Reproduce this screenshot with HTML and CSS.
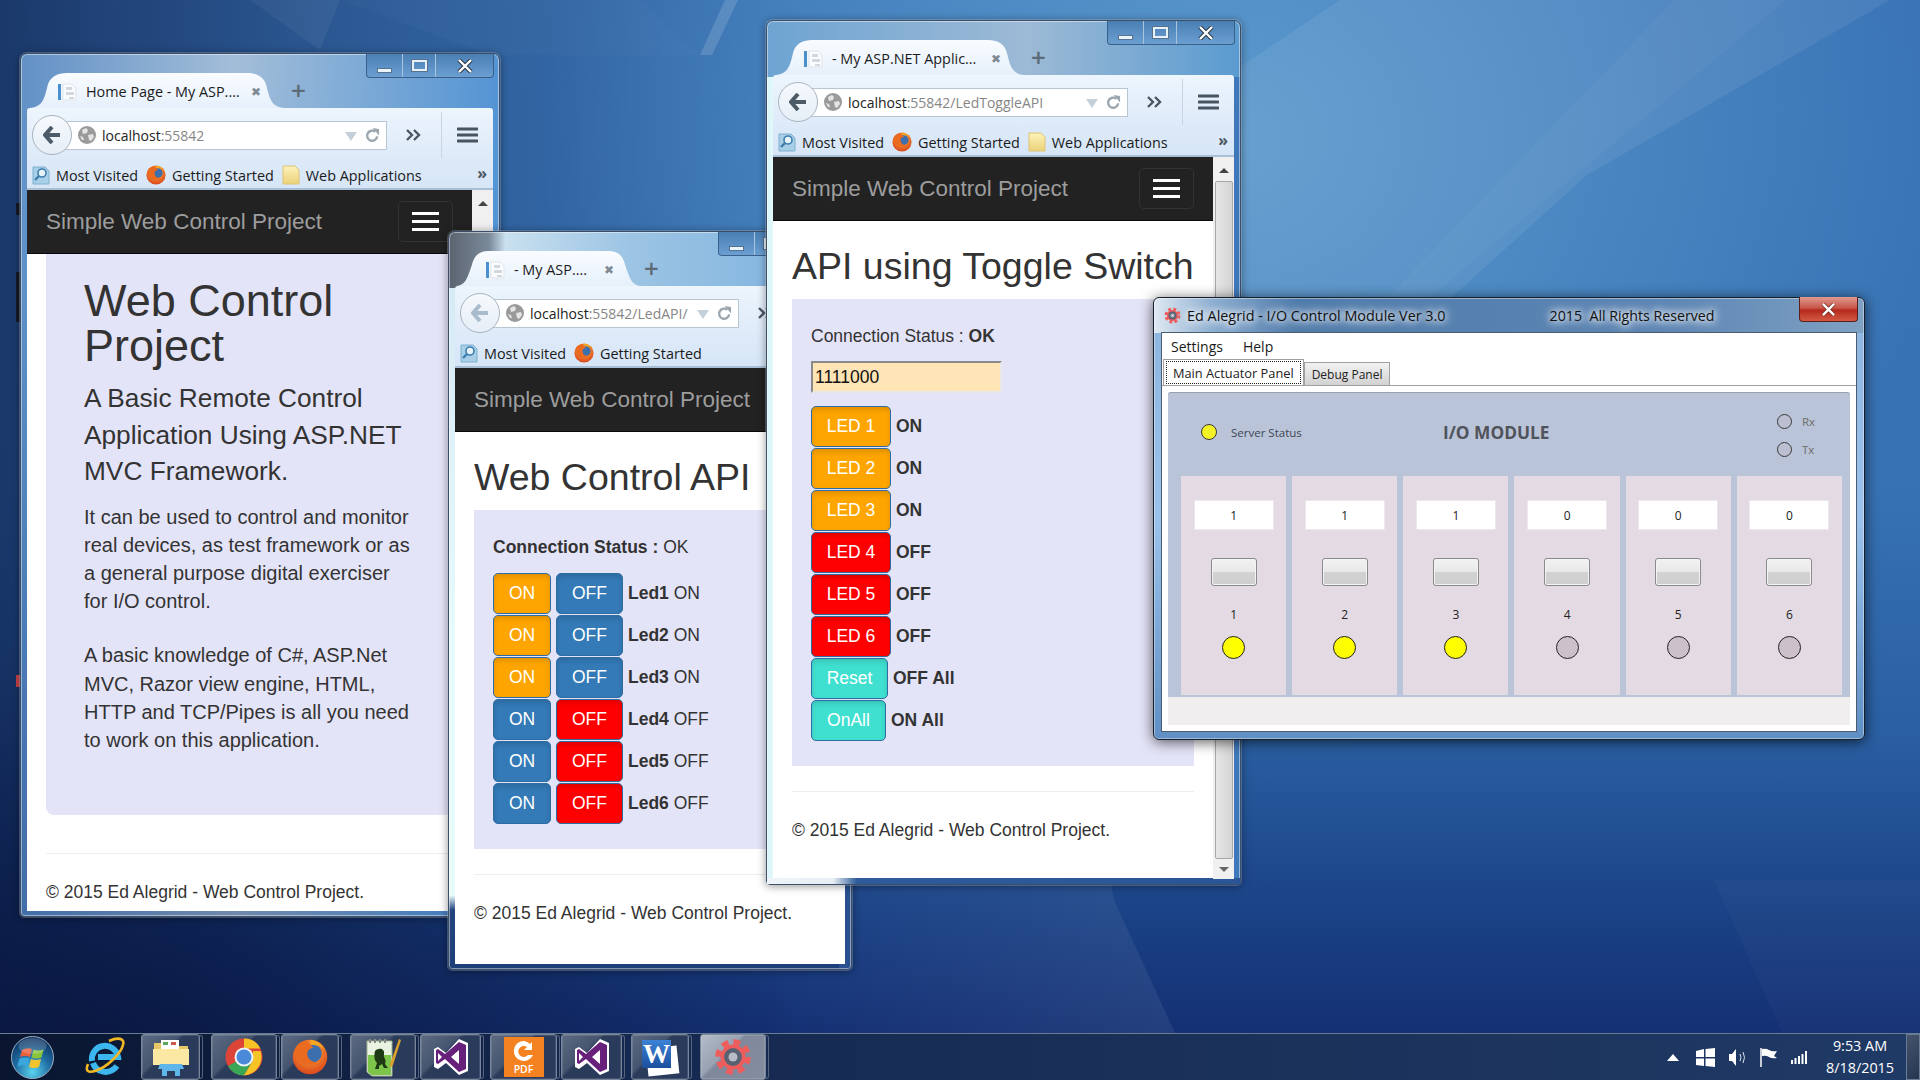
FILE: index.html
```html
<!DOCTYPE html>
<html lang="en">
<head>
    <meta charset="UTF-8">
    <meta name="viewport" content="width=device-width, initial-scale=1.0">
    <title>Simple Web Control Project</title>
    <link rel="stylesheet" href="styles.css">
</head>
<body>
    <svg class="defs" width="0" height="0">
        <defs>
            <linearGradient id="tab-fill" x1="0" y1="0" x2="0" y2="1">
                <stop offset="0" stop-color="#f9fcff"/>
                <stop offset="1" stop-color="#e6f0fb"/>
            </linearGradient>
            <linearGradient id="band-fade" x1="0" y1="0" x2="1" y2="0">
                <stop offset="0" stop-color="#fff" stop-opacity="0"/>
                <stop offset="1" stop-color="#fff" stop-opacity="0.07"/>
            </linearGradient>
            <radialGradient id="fx-body" cx="0.5" cy="0.35" r="0.7">
                <stop offset="0" stop-color="#ffb13a"/>
                <stop offset="1" stop-color="#d8401a"/>
            </radialGradient>
            <linearGradient id="folder-fill" x1="0" y1="0" x2="0" y2="1">
                <stop offset="0" stop-color="#fdf2b8"/>
                <stop offset="1" stop-color="#ecd27a"/>
            </linearGradient>
            <radialGradient id="orb-fill" cx="0.5" cy="0.85" r="0.85">
                <stop offset="0" stop-color="#59d3ee"/>
                <stop offset="0.5" stop-color="#1f6da4"/>
                <stop offset="1" stop-color="#0c2c58"/>
            </radialGradient>

            <symbol id="i-tab" viewBox="0 0 20 20">
                <rect x="0" y="2" width="3" height="16" fill="#4a90cf"/>
                <path d="M5 2h9l4 4v12H5z" fill="#fafcfe" stroke="#dfe4e8"/>
                <path d="M8 5h6v3H8zM8 10h8v3H8zM11 15h5v2h-5z" fill="#d2d8de"/>
            </symbol>
            <symbol id="i-globe" viewBox="0 0 18 18">
                <circle cx="9" cy="9" r="9" fill="#9a9a9a"/>
                <path d="M4 4l4-2 2 2-1 3-4 1zM10 9l5-1 1 3-3 4-2-1zM2 10l3 1 1 3-2 0z" fill="#e4e4e4"/>
            </symbol>
            <symbol id="i-back" viewBox="0 0 18 18">
                <path d="M9 1L2 9l7 8M3 9h14" fill="none" stroke="currentColor" stroke-width="4"/>
            </symbol>
            <symbol id="i-reload" viewBox="0 0 16 16">
                <path d="M13 9a5.4 5.4 0 1 1-2-5" fill="none" stroke="#9ca7b0" stroke-width="2.6"/>
                <path d="M8 0l7 1v7z" fill="#9ca7b0"/>
            </symbol>
            <symbol id="i-chev" viewBox="0 0 16 12">
                <path d="M1 1l5 5-5 5M8 1l5 5-5 5" fill="none" stroke="#4a5662" stroke-width="2.4"/>
            </symbol>
            <symbol id="i-menu" viewBox="0 0 21 16">
                <path d="M1 2h19M1 8h19M1 14h19" stroke="#475560" stroke-width="3" stroke-linecap="round"/>
            </symbol>
            <symbol id="i-visited" viewBox="0 0 18 19">
                <path d="M1 1h12l4 4v13H1z" fill="#a8cfe8" stroke="#7fb0d2"/>
                <circle cx="10" cy="7" r="4" fill="#e6f3fb" stroke="#3d7eaf" stroke-width="1.6"/>
                <path d="M7 10l-4 4" stroke="#3d7eaf" stroke-width="2.4"/>
            </symbol>
            <symbol id="i-fx" viewBox="0 0 20 20">
                <circle cx="10" cy="10" r="9.6" fill="url(#fx-body)"/>
                <circle cx="11.500" cy="8" r="5" fill="#3c6fae"/>
                <path d="M1.500 7C3 14 9 16 14 13c-3 0-5.500-2-5.500-5 0-2 2-3 3.500-3L8 1C4 2 2 4 1.500 7z" fill="#ea6a1f"/>
                <path d="M10 .4c4 .3 7 2.700 8.500 6-2-2.500-5-3.500-8-3z" fill="#f5a623"/>
            </symbol>
            <symbol id="i-folder" viewBox="0 0 18 20">
                <path d="M1 1h12l4 4v14H1z" fill="url(#folder-fill)" stroke="#dcc474"/>
            </symbol>
            <symbol id="i-gear" viewBox="0 0 32 32">
                <circle cx="16" cy="16" r="11.500" fill="none" stroke="#ee5d5d" stroke-width="7" stroke-dasharray="5.150 3.880"/>
                <circle cx="16" cy="16" r="10.500" fill="#ee5d5d"/>
                <circle cx="16" cy="16" r="7.500" fill="#596273"/>
                <circle cx="16" cy="16" r="3.800" fill="#b9bcc6"/>
            </symbol>
            <symbol id="i-vs" viewBox="0 0 36 38">
                <path d="M26 1l9 4v28l-9 4-13-12-8 6-4-2V11l4-2 8 6z" fill="#fff"/>
                <path d="M26 4l7 3v24l-7 3-14-13-7 5-2-1V12l2-1 7 5zM26 12l-8 7 8 7zM5 15v8l4-4z" fill="#68217a" fill-rule="evenodd"/>
            </symbol>
        </defs>
    </svg>

    <svg class="wall-marks" viewBox="0 0 1920 1080" preserveAspectRatio="none">
        <polygon points="1170,180 1240,67 1340,0 1674,0 1387,297 1240,470" fill="#fff" opacity="0.07"/>
        <polygon points="1674,0 1890,0 1587,175 1452,297 1387,297" fill="#fff" opacity="0.07"/>
        <polygon points="1674,0 1786,0 1430,297 1387,297" fill="#fff" opacity="0.03"/>
        <polygon points="250,0 320,50 340,0" fill="#fff" opacity="0.05"/>
        <polygon points="340,0 640,0 700,55 490,55" fill="#fff" opacity="0.02"/>
        <polygon points="725,0 738,0 712,55 700,55" fill="#fff" opacity="0.14"/>
        <polygon points="760,1033 1175,1033 1114,900 1090,770 760,770" fill="url(#band-fade)"/>
        <polygon points="1714,880 1782,1033 1920,1033 1920,880" fill="#fff" opacity="0.025"/>
    </svg>
    <span class="desk-mark mark-a"></span>
    <span class="desk-mark mark-b"></span>
    <span class="desk-mark mark-c"></span>

    <!-- home page window -->
    <section class="window win-home">
        <div class="caption-btns">
            <span class="cap-btn cap-min"><i></i></span>
            <span class="cap-btn cap-max"><i></i></span>
            <span class="cap-btn cap-close">
                <svg viewBox="0 0 16 14" width="16" height="14"><path d="M2 1l12 12M14 1L2 13" stroke="#2c3a48" stroke-width="4.400"/><path d="M2 1l12 12M14 1L2 13" stroke="#fff" stroke-width="2.400"/></svg>
            </span>
        </div>
        <div class="tabstrip">
            <div class="tab tab-home">
                <svg class="tab-shape" viewBox="0 0 244 35" preserveAspectRatio="none"><path d="M0 35C14 35 16 27 19 14 21 4 28 0 38 0H206C216 0 223 4 225 14 228 27 230 35 244 35Z" fill="url(#tab-fill)"/></svg>
                <svg class="tab-icon" width="20" height="20"><use href="#i-tab"/></svg>
                <span class="tab-title">Home Page - My ASP....</span>
                <span class="tab-close">✖</span>
            </div>
            <span class="tab-new">+</span>
        </div>
        <div class="toolbar">
            <span class="back"><svg width="18" height="18"><use href="#i-back"/></svg></span>
            <div class="urlbar">
                <svg class="globe" width="18" height="18"><use href="#i-globe"/></svg>
                <span class="url-text">localhost<span class="url-dim">:55842</span></span>
                <span class="url-drop"></span>
                <svg class="url-reload" width="15" height="15"><use href="#i-reload"/></svg>
            </div>
            <svg class="chev" width="16" height="12"><use href="#i-chev"/></svg>
            <span class="tool-sep"></span>
            <svg class="menu-icon" width="21" height="16"><use href="#i-menu"/></svg>
        </div>
        <div class="bookmarks">
            <span class="bm"><svg width="18" height="19"><use href="#i-visited"/></svg>Most Visited</span>
            <span class="bm"><svg width="20" height="20"><use href="#i-fx"/></svg>Getting Started</span>
            <span class="bm"><svg width="18" height="20"><use href="#i-folder"/></svg>Web Applications</span>
            <span class="bm-more">»</span>
        </div>
        <div class="client">
            <div class="content">
                <nav class="navbar">
                    <a class="brand">Simple Web Control Project</a>
                    <span class="toggle"><i></i><i></i><i></i></span>
                </nav>
                <main class="page">
                    <div class="jumbotron">
                        <h1>Web Control Project</h1>
                        <p class="lead">A Basic Remote Control Application Using ASP.NET MVC Framework.</p>
                        <p>It can be used to control and monitor real devices, as test framework or as a general purpose digital exerciser for I/O control.</p>
                        <p>A basic knowledge of C#, ASP.Net MVC, Razor view engine, HTML, HTTP and TCP/Pipes is all you need to work on this application.</p>
                    </div>
                    <hr class="rule-home">
                    <footer>© 2015 Ed Alegrid - Web Control Project.</footer>
                </main>
            </div>
            <div class="scrollbar"><span class="sb-up"></span><span class="sb-thumb"></span><span class="sb-down"></span></div>
        </div>
    </section>

    <!-- led api window -->
    <section class="window win-led">
        <div class="caption-btns">
            <span class="cap-btn cap-min"><i></i></span>
            <span class="cap-btn cap-max"><i></i></span>
            <span class="cap-btn cap-close"></span>
        </div>
        <div class="tabstrip">
            <div class="tab tab-led">
                <svg class="tab-shape" viewBox="0 0 244 35" preserveAspectRatio="none"><path d="M0 35C14 35 16 27 22 14 25 4 32 0 44 0H200C212 0 219 4 222 14 228 27 230 35 244 35Z" fill="url(#tab-fill)"/></svg>
                <svg class="tab-icon" width="20" height="20"><use href="#i-tab"/></svg>
                <span class="tab-title">- My ASP....</span>
                <span class="tab-close">✖</span>
            </div>
            <span class="tab-new">+</span>
        </div>
        <div class="toolbar">
            <span class="back back-off"><svg width="18" height="18"><use href="#i-back"/></svg></span>
            <div class="urlbar">
                <svg class="globe" width="18" height="18"><use href="#i-globe"/></svg>
                <span class="url-text url-cut">localhost<span class="url-dim">:55842/LedAPI/</span></span>
                <span class="url-drop"></span>
                <svg class="url-reload" width="15" height="15"><use href="#i-reload"/></svg>
            </div>
            <svg class="chev" width="16" height="12"><use href="#i-chev"/></svg>
            <span class="tool-sep"></span>
            <svg class="menu-icon" width="21" height="16"><use href="#i-menu"/></svg>
        </div>
        <div class="bookmarks">
            <span class="bm"><svg width="18" height="19"><use href="#i-visited"/></svg>Most Visited</span>
            <span class="bm"><svg width="20" height="20"><use href="#i-fx"/></svg>Getting Started</span>
        </div>
        <div class="client">
            <div class="content">
                <nav class="navbar">
                    <a class="brand">Simple Web Control Project</a>
                </nav>
                <main class="page">
                    <h2>Web Control API</h2>
                    <div class="panel">
                        <p class="status"><b>Connection Status :</b> OK</p>
                        <div class="led-row"><button class="btn on-lit">ON</button><button class="btn off-dim">OFF</button><span><b>Led1</b> ON</span></div>
                        <div class="led-row"><button class="btn on-lit">ON</button><button class="btn off-dim">OFF</button><span><b>Led2</b> ON</span></div>
                        <div class="led-row"><button class="btn on-lit">ON</button><button class="btn off-dim">OFF</button><span><b>Led3</b> ON</span></div>
                        <div class="led-row"><button class="btn on-dim">ON</button><button class="btn off-lit">OFF</button><span><b>Led4</b> OFF</span></div>
                        <div class="led-row"><button class="btn on-dim">ON</button><button class="btn off-lit">OFF</button><span><b>Led5</b> OFF</span></div>
                        <div class="led-row"><button class="btn on-dim">ON</button><button class="btn off-lit">OFF</button><span><b>Led6</b> OFF</span></div>
                    </div>
                    <hr>
                    <footer>© 2015 Ed Alegrid - Web Control Project.</footer>
                </main>
            </div>
        </div>
    </section>

    <!-- toggle switch window -->
    <section class="window win-toggle">
        <div class="caption-btns">
            <span class="cap-btn cap-min"><i></i></span>
            <span class="cap-btn cap-max"><i></i></span>
            <span class="cap-btn cap-close">
                <svg viewBox="0 0 16 14" width="16" height="14"><path d="M2 1l12 12M14 1L2 13" stroke="#2c3a48" stroke-width="4.400"/><path d="M2 1l12 12M14 1L2 13" stroke="#fff" stroke-width="2.400"/></svg>
            </span>
        </div>
        <div class="tabstrip">
            <div class="tab tab-toggle">
                <svg class="tab-shape" viewBox="0 0 244 35" preserveAspectRatio="none"><path d="M0 35C14 35 16 27 19 14 21 4 28 0 38 0H206C216 0 223 4 225 14 228 27 230 35 244 35Z" fill="url(#tab-fill)"/></svg>
                <svg class="tab-icon" width="20" height="20"><use href="#i-tab"/></svg>
                <span class="tab-title">- My ASP.NET Applic...</span>
                <span class="tab-close">✖</span>
            </div>
            <span class="tab-new">+</span>
        </div>
        <div class="toolbar">
            <span class="back"><svg width="18" height="18"><use href="#i-back"/></svg></span>
            <div class="urlbar">
                <svg class="globe" width="18" height="18"><use href="#i-globe"/></svg>
                <span class="url-text">localhost<span class="url-dim">:55842/LedToggleAPI</span></span>
                <span class="url-drop"></span>
                <svg class="url-reload" width="15" height="15"><use href="#i-reload"/></svg>
            </div>
            <svg class="chev" width="16" height="12"><use href="#i-chev"/></svg>
            <span class="tool-sep"></span>
            <svg class="menu-icon" width="21" height="16"><use href="#i-menu"/></svg>
        </div>
        <div class="bookmarks">
            <span class="bm"><svg width="18" height="19"><use href="#i-visited"/></svg>Most Visited</span>
            <span class="bm"><svg width="20" height="20"><use href="#i-fx"/></svg>Getting Started</span>
            <span class="bm"><svg width="18" height="20"><use href="#i-folder"/></svg>Web Applications</span>
            <span class="bm-more">»</span>
        </div>
        <div class="client">
            <div class="content">
                <nav class="navbar">
                    <a class="brand">Simple Web Control Project</a>
                    <span class="toggle"><i></i><i></i><i></i></span>
                </nav>
                <main class="page">
                    <h2>API using Toggle Switch</h2>
                    <div class="panel">
                        <p class="status">Connection Status : <b>OK</b></p>
                        <input class="bits" type="text" value="1111000">
                        <div class="led-row"><button class="btn led on-lit">LED 1</button><b>ON</b></div>
                        <div class="led-row"><button class="btn led on-lit">LED 2</button><b>ON</b></div>
                        <div class="led-row"><button class="btn led on-lit">LED 3</button><b>ON</b></div>
                        <div class="led-row"><button class="btn led off-lit">LED 4</button><b>OFF</b></div>
                        <div class="led-row"><button class="btn led off-lit">LED 5</button><b>OFF</b></div>
                        <div class="led-row"><button class="btn led off-lit">LED 6</button><b>OFF</b></div>
                        <div class="led-row"><button class="btn teal reset">Reset</button><b>OFF All</b></div>
                        <div class="led-row"><button class="btn teal onall">OnAll</button><b>ON All</b></div>
                    </div>
                    <hr>
                    <footer>© 2015 Ed Alegrid - Web Control Project.</footer>
                </main>
            </div>
            <div class="scrollbar"><span class="sb-up"></span><span class="sb-thumb"></span><span class="sb-down"></span></div>
        </div>
    </section>

    <!-- io module window -->
    <section class="module">
        <header class="mod-title">
            <svg width="17" height="17"><use href="#i-gear"/></svg>
            <span class="mod-name">Ed Alegrid - I/O Control Module Ver 3.0</span>
            <span class="mod-rights">2015&nbsp; All Rights Reserved</span>
            <span class="mod-close">
                <svg viewBox="0 0 16 14" width="15" height="13"><path d="M2 1l12 12M14 1L2 13" stroke="#7a2a22" stroke-width="4.400"/><path d="M2 1l12 12M14 1L2 13" stroke="#fff" stroke-width="2.600"/></svg>
            </span>
        </header>
        <div class="mod-client">
            <div class="mod-menu"><span>Settings</span><span>Help</span></div>
            <div class="mod-tabs">
                <span class="mod-tab active"><em>Main Actuator Panel</em></span>
                <span class="mod-tab">Debug Panel</span>
            </div>
            <div class="mod-body">
                <div class="io-panel">
                    <div class="io-head">
                        <div class="server"><span class="dot dot-server"></span>Server Status</div>
                        <strong>I/O MODULE</strong>
                        <div class="rxtx">
                            <div><span class="dot dot-small"></span>Rx</div>
                            <div><span class="dot dot-small"></span>Tx</div>
                        </div>
                    </div>
                    <div class="io-grid">
                        <div class="io-col"><div class="io-val">1</div><button class="io-btn"></button><span class="io-num">1</span><span class="dot dot-on"></span></div>
                        <div class="io-col"><div class="io-val">1</div><button class="io-btn"></button><span class="io-num">2</span><span class="dot dot-on"></span></div>
                        <div class="io-col"><div class="io-val">1</div><button class="io-btn"></button><span class="io-num">3</span><span class="dot dot-on"></span></div>
                        <div class="io-col"><div class="io-val">0</div><button class="io-btn"></button><span class="io-num">4</span><span class="dot dot-off"></span></div>
                        <div class="io-col"><div class="io-val">0</div><button class="io-btn"></button><span class="io-num">5</span><span class="dot dot-off"></span></div>
                        <div class="io-col"><div class="io-val">0</div><button class="io-btn"></button><span class="io-num">6</span><span class="dot dot-off"></span></div>
                    </div>
                </div>
                <div class="io-status"></div>
            </div>
        </div>
    </section>

    <!-- taskbar -->
    <footer class="taskbar">
        <span class="orb">
            <svg width="43" height="43" viewBox="0 0 43 43">
                <circle cx="21.500" cy="21.500" r="21" fill="url(#orb-fill)" stroke="#9fb2c6"/>
                <path d="M11 14q5-3 10-1l-2 8q-5-2-10 0z" fill="#e8603c"/>
                <path d="M22.500 13.500q5 2 10 0l-2 8q-5 2-10 0z" fill="#8ac43f"/>
                <path d="M8.500 22.500q5-2 10 0l-2 8q-5-2-10 0z" fill="#3aa6dc"/>
                <path d="M20 23q5 2 10 0l-2 8q-5 2-10 0z" fill="#f4c430"/>
                <ellipse cx="21.500" cy="10" rx="14" ry="8" fill="#fff" opacity="0.18"/>
            </svg>
        </span>
        <span class="tb-plain">
            <svg width="40" height="40" viewBox="0 0 40 40">
                <path d="M7 24A13 13 0 1 1 33 20H13M8 26c3 9 16 13 24 3" fill="none" stroke="#3cb6ee" stroke-width="6"/>
                <path d="M24 4c9-4 16-3 14 4-2 8-15 22-28 26C3 36 0 34 3 27" fill="none" stroke="#f2b824" stroke-width="2.600"/>
            </svg>
        </span>
        <span class="tb w59">
            <svg width="38" height="40" viewBox="0 0 38 40">
                <path d="M2 6h13l3 3h18v18H2z" fill="#e8c766"/>
                <rect x="9" y="3" width="18" height="12" fill="#fff"/>
                <rect x="11" y="5" width="5" height="3" fill="#5ba85b"/>
                <rect x="19" y="5" width="5" height="3" fill="#d05a4a"/>
                <path d="M1 12h36v16H1z" fill="#fbe9a3"/>
                <path d="M8 27h22l2 5h-4v7h-5v-5h-8v5H10v-7H6z" fill="#5eb6ea"/>
            </svg>
        </span>
        <span class="tb w66 gap-big">
            <svg width="38" height="38" viewBox="0 0 38 38">
                <circle cx="19" cy="19" r="18.500" fill="#dc4437"/>
                <path d="M19 19L3 28.200A18.500 18.500 0 0 0 19 37.500l9-15z" fill="#3aa757"/>
                <path d="M19 .5a18.500 18.500 0 0 1 16.500 10H19zM28 13h7.500A18.500 18.500 0 0 1 19 37.500l9-15z" fill="#f7c325"/>
                <circle cx="19" cy="19" r="9.500" fill="#eef2f6"/>
                <circle cx="19" cy="19" r="7.500" fill="#4a8ad8"/>
            </svg>
        </span>
        <span class="tb w58">
            <svg width="36" height="38"><use href="#i-fx"/></svg>
        </span>
        <span class="tb w66 gap-big">
            <svg width="38" height="40" viewBox="0 0 38 40">
                <path d="M3 4h25v35H8l-5-4z" fill="#eaf3e2" stroke="#9db38c"/>
                <path d="M5 4h2M10 4h2M15 4h2M20 4h2" stroke="#888" stroke-width="4"/>
                <path d="M4 18h23v20H8l-4-3z" fill="#7cc44a"/>
                <path d="M11 14c4-4 10-2 9 3-1 4 3 5 1 10l3 4h-4l-2-4-3 2v3h-4l2-6c-3-3-3-8-2-12z" fill="#1d3a14"/>
                <path d="M35 2l2 1-8 25-3 3 0-4z" fill="#d9a02c"/>
            </svg>
        </span>
        <span class="tb w61">
            <svg width="36" height="38"><use href="#i-vs"/></svg>
        </span>
        <span class="tb w67 gap-mid">
            <span class="pdf-icon">
                <svg width="26" height="24" viewBox="0 0 26 24"><path d="M13 2a10 10 0 1 0 9 14h-5a5.500 5.500 0 1 1-1-8l-3 3h8V3l-2 2a10 10 0 0 0-6-3z" fill="#fff"/></svg>
                <span>PDF</span>
            </span>
        </span>
        <span class="tb w61">
            <svg width="36" height="38"><use href="#i-vs"/></svg>
        </span>
        <span class="tb w58 gap-mid">
            <span class="word-icon"><span class="word-page"></span><b>W</b></span>
        </span>
        <span class="tb w66 gap-big tb-active">
            <svg width="38" height="38"><use href="#i-gear"/></svg>
        </span>
        <div class="tray">
            <svg class="tray-up" width="12" height="7" viewBox="0 0 12 7"><path d="M6 0l6 7H0z" fill="#fff"/></svg>
            <svg width="19" height="19" viewBox="0 0 19 19"><path d="M0 3l8-2v8H0zM9.500 1L19 0v9H9.500zM0 10.500h8V18l-8-1zM9.500 10.500H19V19l-9.500-1z" fill="#fff"/></svg>
            <svg width="19" height="19" viewBox="0 0 19 19"><path d="M1 6h3l4-5v17l-4-5H1z" fill="#fff"/><path d="M12 6q2 3.500 0 7M15 4q3 5.500 0 11" fill="none" stroke="#dfe6ee"/></svg>
            <svg width="18" height="19" viewBox="0 0 18 19"><path d="M1 0v19" stroke="#fff" stroke-width="1.500"/><path d="M2 1q4-1 7 1 3 2 8 1l-3 5 3 2q-5 1-8-1-3-2-7-1z" fill="#fff"/></svg>
            <svg width="16" height="13" viewBox="0 0 16 13"><path d="M0 9h2v4H0zM3.500 7h2v6h-2zM7 5h2v8H7zM10.500 3h2v10h-2zM14 0h2v13h-2z" fill="#fff"/></svg>
            <div class="clock">9:53 AM<br>8/18/2015</div>
            <span class="show-desktop"></span>
        </div>
    </footer>
</body>
</html>
```

FILE: styles.css
```css
* {
    box-sizing: border-box;
}
body {
    margin: 0;
    width: 1920px;
    height: 1080px;
    position: relative;
    overflow: hidden;
    font-family: "Liberation Sans", Arial, sans-serif;
    color: #333;
    background:
        radial-gradient(ellipse 700px 620px at 1240px 140px, rgba(120, 185, 225, 0.55), rgba(120, 185, 225, 0) 100%),
        radial-gradient(ellipse 700px 400px at 100px 1040px, rgba(6, 16, 50, 0.55), rgba(6, 16, 50, 0) 100%),
        linear-gradient(90deg, rgba(8, 20, 60, 0.62) 0, rgba(8, 20, 60, 0.28) 18%, rgba(8, 20, 60, 0) 42%),
        linear-gradient(180deg, #3a74b6 0, #3773b4 45%, #2a5fa2 68%, #1a4185 85%, #12296c 100%);
}
.defs {
    position: absolute;
}
.wall-marks {
    position: absolute;
    left: 0;
    top: 0;
    width: 1920px;
    height: 1080px;
}
.desk-mark {
    position: absolute;
    left: 16px;
    width: 4px;
    background: #141a26;
}
.mark-a {
    top: 203px;
    height: 12px;
}
.mark-b {
    top: 272px;
    height: 50px;
}
.mark-c {
    top: 675px;
    height: 12px;
    background: #c8434a;
}

/* browser windows */
.window {
    position: absolute;
    display: flex;
    flex-direction: column;
    padding: 0 6px 5px;
    border: 1px solid #3c4f66;
    border-radius: 7px 7px 4px 4px;
    box-shadow: inset 0 0 0 1px rgba(255, 255, 255, 0.45), 0 0 0 1px rgba(210, 225, 240, 0.25), 0 1px 8px rgba(0, 0, 0, 0.45);
}
.win-home {
    left: 20px;
    top: 53px;
    width: 480px;
    height: 864px;
    background:
        linear-gradient(90deg, rgba(80, 130, 190, 0.7) 0, rgba(180, 198, 216, 0.55) 45%, rgba(70, 140, 210, 0.8) 100%),
        linear-gradient(180deg, #8fb4d8 0, #7fb4e2 25%, #2b5390 80%, #1e3f78 100%);
}
.win-led {
    left: 448px;
    top: 231px;
    width: 404px;
    height: 739px;
    background:
        linear-gradient(90deg, #5b6470 0, #7a8a9a 10%, #c9e0ef 14%, #9cc4e4 45%, #7ab0dd 100%) top / 100% 56px no-repeat,
        linear-gradient(90deg, rgba(36, 68, 126, 0) 97%, #2a5090 97%),
        linear-gradient(180deg, #d4e8f6 0, #e6fbfd 55%, #e8fbfb 90%, #24447e 92%, #1e3f78 100%);
}
.win-toggle {
    left: 766px;
    top: 20px;
    width: 475px;
    height: 865px;
    background:
        linear-gradient(90deg, #6ea4d2 0, #9dbad6 55%, #5a9bd0 100%) top / 100% 56px no-repeat,
        linear-gradient(90deg, #d8f4f8 0, #e6fbfb 2%, #6aa0d2 3%, #3f78ba 100%);
}
.win-toggle::before {
    content: "";
    position: absolute;
    left: 0;
    right: 0;
    bottom: 0;
    height: 6px;
    background: linear-gradient(90deg, #eef4f8 0, #e8eef4 14%, #2f5b9c 19%, #2a5596 100%);
}
.caption-btns {
    position: absolute;
    top: 0;
    right: 5px;
    display: flex;
    height: 24px;
    border: 1px solid #3a6089;
    border-top: none;
    border-radius: 0 0 4px 4px;
    overflow: hidden;
    background: linear-gradient(180deg, #4a7fb4, #6b9fd2);
}
.cap-btn {
    display: flex;
    align-items: center;
    justify-content: center;
    border-left: 1px solid #a8c4df;
    height: 100%;
}
.cap-btn:first-child {
    border-left: none;
}
.cap-min {
    width: 35px;
}
.cap-min i {
    width: 15px;
    height: 5px;
    margin-top: 10px;
    background: #eaf2fa;
    border: 1px solid #56728f;
}
.cap-max {
    width: 33px;
}
.cap-max i {
    width: 17px;
    height: 13px;
    background: transparent;
    border: 3px solid #e8f0f8;
    outline: 1px solid #56728f;
    outline-offset: -1px;
}
.cap-close {
    width: 58px;
}
.tabstrip {
    position: relative;
    z-index: 1;
    height: 54px;
    display: flex;
    align-items: flex-end;
}
.tab {
    position: relative;
    height: 35px;
    display: flex;
    align-items: center;
    padding: 2px 26px 0 31px;
    font-family: "Open Sans", sans-serif;
    font-size: 14.4px;
    color: #1b1b1b;
}
.tab-home {
    width: 260px;
}
.tab-led {
    width: 187px;
    padding-right: 28px;
}
.tab-led + .tab-new {
    margin-left: 1px;
}
.tab-toggle {
    width: 254px;
}
.tab-shape {
    position: absolute;
    left: 0;
    top: 0;
    width: 100%;
    height: 100%;
}
.tab-icon {
    position: relative;
    flex: none;
    margin-right: 8px;
}
.tab-title {
    position: relative;
    flex: 1;
    white-space: nowrap;
}
.tab-close {
    position: relative;
    color: #7e8a94;
    font-family: "DejaVu Sans", sans-serif;
    font-size: 12px;
}
.tab-new {
    position: relative;
    align-self: flex-end;
    height: 35px;
    margin-left: 3px;
    font-family: "DejaVu Sans", sans-serif;
    font-size: 20px;
    line-height: 34px;
    color: #5d6b78;
    font-weight: bold;
}
.toolbar {
    height: 54px;
    display: flex;
    align-items: center;
    padding-left: 5px;
    background: linear-gradient(180deg, #edf5fd, #dce9f8);
    border-radius: 3px 3px 0 0;
}
.back {
    position: relative;
    z-index: 1;
    flex: none;
    width: 40px;
    height: 40px;
    margin-right: -16px;
    border-radius: 50%;
    border: 1px solid #a8b4c0;
    background: linear-gradient(180deg, #f6f9fd, #e6eef7);
    color: #4d5b68;
    display: flex;
    align-items: center;
    justify-content: center;
}
.back-off {
    color: #a9bccd;
}
.urlbar {
    flex: 1;
    min-width: 0;
    height: 29px;
    display: flex;
    align-items: center;
    padding: 0 6px 0 21px;
    background: #fff;
    border: 1px solid #b8c6d4;
    font-family: "Open Sans", sans-serif;
    font-size: 14px;
    color: #222;
}
.globe {
    flex: none;
    margin-right: 6px;
}
.url-text {
    flex: 1;
    min-width: 0;
    white-space: nowrap;
    overflow: hidden;
}
.url-dim {
    color: #868686;
}
.url-drop {
    flex: none;
    width: 0;
    height: 0;
    margin: 2px 8px 0 8px;
    border-left: 6px solid transparent;
    border-right: 6px solid transparent;
    border-top: 9px solid #c5d0da;
}
.url-reload {
    flex: none;
}
.chev {
    flex: none;
    margin: 0 19px 0 19px;
}
.tool-sep {
    flex: none;
    width: 1px;
    height: 46px;
    background: #c8d6e4;
}
.menu-icon {
    flex: none;
    margin: 0 15px;
}
.bookmarks {
    position: relative;
    height: 28px;
    display: flex;
    align-items: center;
    gap: 8px;
    padding-left: 5px;
    background: linear-gradient(180deg, #dce9f8, #d7e6f7);
    border-bottom: 2px solid #a9bfd6;
    font-family: "Open Sans", sans-serif;
    font-size: 14.4px;
    color: #1b1b1b;
    white-space: nowrap;
}
.bm {
    display: flex;
    align-items: center;
    gap: 6px;
}
.bm-more {
    position: absolute;
    right: 6px;
    top: 0;
    color: #4a5662;
    font-size: 16px;
    line-height: 22px;
    font-weight: bold;
}
.client {
    flex: 1;
    min-height: 0;
    display: flex;
}
.content {
    flex: 1;
    min-width: 0;
    display: flex;
    flex-direction: column;
    background: #fff;
}
.navbar {
    flex: none;
    height: 64px;
    display: flex;
    align-items: center;
    justify-content: space-between;
    padding: 0 19px;
    background: #222;
    border-bottom: 1px solid #080808;
}
.brand {
    color: #9d9d9d;
    font-size: 22.5px;
    white-space: nowrap;
}
.toggle {
    width: 55px;
    height: 41px;
    display: flex;
    flex-direction: column;
    align-items: center;
    justify-content: center;
    gap: 5px;
    border: 1px solid #333;
    border-radius: 5px;
}
.toggle i {
    width: 27px;
    height: 3px;
    background: #fff;
}
.page {
    flex: 1;
    min-height: 0;
    padding: 0 19px;
    font-size: 17.5px;
}
.jumbotron {
    padding: 24px 38px 61px;
    background: #e4e4f8;
    border-radius: 0 0 8px 8px;
}
.jumbotron h1 {
    margin: 0 0 12px;
    font-size: 45px;
    line-height: 45px;
    font-weight: normal;
}
.jumbotron p {
    margin: 0 0 26px;
    font-size: 20px;
    line-height: 28.2px;
}
.jumbotron .lead {
    margin: 0 0 13px;
    font-size: 26.25px;
    line-height: 36.5px;
}
.jumbotron p:last-child {
    margin: 0;
}
h2 {
    margin: 25px 0 12px;
    font-size: 37.5px;
    line-height: 41px;
    font-weight: normal;
}
.panel {
    padding: 25px 19px;
    background: #e4e4f8;
}
.status {
    margin: 0 0 13px;
    line-height: 24px;
}
.led-row {
    height: 42px;
    display: flex;
    align-items: center;
    gap: 5px;
}
.btn {
    width: 58px;
    height: 41px;
    padding: 0;
    border: 1px solid #2e6da4;
    border-radius: 5px;
    font-family: inherit;
    font-size: 17.5px;
    color: #fff;
    box-shadow: inset 0 3px 5px rgba(0, 0, 0, 0.125);
}
.btn + .btn {
    width: 67px;
}
.on-lit {
    background: #ffa500;
}
.on-dim,
.off-dim {
    background: #337ab7;
}
.off-lit {
    background: #f00;
}
.teal {
    background: #40e0d0;
}
.btn.led {
    width: 80px;
}
.btn.reset {
    width: 77px;
}
.btn.onall {
    width: 75px;
}
.bits {
    display: block;
    width: 191px;
    height: 32px;
    margin-bottom: 12px;
    padding: 0 2px;
    border: 2px solid;
    border-color: #8a8a8a #e8e8e8 #e8e8e8 #8a8a8a;
    background: #ffe4b5;
    font-family: inherit;
    font-size: 17.5px;
    color: #111;
}
hr {
    margin: 25px 0 26px;
    border: none;
    border-top: 1px solid #eee;
}
.rule-home {
    margin: 38px 0 26px;
}
footer {
    line-height: 24px;
}
.scrollbar {
    flex: none;
    position: relative;
    width: 21px;
    display: flex;
    flex-direction: column;
    align-items: center;
    background: #f0f0f0;
}
.sb-up,
.sb-down {
    flex: none;
    width: 0;
    height: 0;
    margin: 11px 0 8px;
    border-left: 5px solid transparent;
    border-right: 5px solid transparent;
    border-bottom: 5px solid #444;
}
.sb-down {
    margin: 8px 0 7px;
    border-bottom: none;
    border-top: 5px solid #666;
}
.win-home .sb-up {
    margin-bottom: 40px;
}
.sb-thumb {
    flex: 1;
    width: 18px;
    border: 1px solid #a8a8a8;
    border-radius: 2px;
    background: linear-gradient(90deg, #e6e6e6, #d4d4d4);
}

/* io module */
.module {
    position: absolute;
    left: 1153px;
    top: 297px;
    width: 712px;
    height: 443px;
    display: flex;
    flex-direction: column;
    padding: 0 7px 7px 7px;
    border: 1px solid #15202e;
    border-radius: 6px;
    background:
        linear-gradient(90deg, #dfe9f2 0, #8fb0d2 8%, #4f7bab 20%, #5d86b4 72%, #7fa1c3 100%) top / 100% 35px no-repeat,
        linear-gradient(180deg, #8db4df 0, #9bc2ec 50%, #5f8fc4 100%);
    box-shadow: inset 0 0 0 1px rgba(255, 255, 255, 0.4), 0 2px 14px rgba(0, 0, 0, 0.65);
}
.mod-title {
    position: relative;
    flex: none;
    height: 34px;
    display: flex;
    align-items: center;
    font-family: "Open Sans", sans-serif;
    font-size: 14.4px;
    color: #111;
}
.mod-title svg {
    flex: none;
    margin: 0 6px 0 3px;
}
.mod-name,
.mod-rights {
    text-shadow: 0 0 6px #fff, 0 0 10px #fff, 0 0 14px #fff;
}
.mod-rights {
    margin-left: 104px;
    font-size: 14.2px;
}
.mod-close {
    position: absolute;
    top: -1px;
    right: -1px;
    width: 59px;
    height: 25px;
    display: flex;
    align-items: center;
    justify-content: center;
    border: 1px solid #5a1f1a;
    border-top: none;
    border-radius: 0 0 4px 4px;
    background: linear-gradient(180deg, #e09a90 0, #c8584a 45%, #b5291c 55%, #d45a44 100%);
}
.mod-close svg {
    margin: 0;
}
.mod-client {
    flex: 1;
    min-height: 0;
    display: flex;
    flex-direction: column;
    background: #fff;
    border: 1px solid #4a5c70;
    font-family: "Open Sans", sans-serif;
}
.mod-menu {
    flex: none;
    height: 27px;
    display: flex;
    align-items: center;
    gap: 20px;
    padding-left: 9px;
    font-size: 14px;
    color: #1a1a1a;
}
.mod-tabs {
    flex: none;
    height: 26px;
    display: flex;
    align-items: flex-end;
    padding-left: 1px;
    border-bottom: 1px solid #a0a0a0;
    font-size: 12px;
    color: #222;
}
.mod-tab {
    height: 23px;
    padding: 0 7px;
    display: flex;
    align-items: center;
    border: 1px solid #a0a0a0;
    border-bottom: none;
    background: linear-gradient(180deg, #f2f2f2, #d2d2d2);
}
.mod-tab.active {
    height: 26px;
    padding: 1px 2px;
    background: #fff;
    border-bottom: none;
    font-size: 12.8px;
}
.mod-tab em {
    height: 100%;
    padding: 0 6px;
    font-style: normal;
    border: 1px dotted #222;
    display: flex;
    align-items: center;
}
.mod-body {
    flex: 1;
    min-height: 0;
    display: flex;
    flex-direction: column;
    padding: 6px 6px 6px 6px;
}
.io-panel {
    flex: none;
    height: 305px;
    padding: 0 8px 2px 13px;
    background: #bac4d8;
    border-radius: 3px 3px 0 0;
    box-shadow: inset 0 1px 0 #9aa2b0;
}
.io-head {
    height: 84px;
    padding-bottom: 4px;
    display: flex;
    align-items: center;
    position: relative;
}
.server {
    width: 262px;
    padding-left: 20px;
    display: flex;
    align-items: center;
    gap: 14px;
    font-size: 11.5px;
    color: #3c4654;
}
.io-head strong {
    font-size: 17.3px;
    color: #50535c;
    font-family: "Open Sans", sans-serif;
}
.rxtx {
    margin: 6px 0 0 auto;
    padding-right: 27px;
    display: flex;
    flex-direction: column;
    gap: 13px;
    font-size: 11.5px;
    color: #6c6c68;
}
.rxtx div {
    display: flex;
    align-items: center;
    gap: 10px;
}
.dot {
    display: block;
    flex: none;
    border-radius: 50%;
    border: 1.5px solid #222;
}
.dot-server {
    width: 16px;
    height: 16px;
    background: #f2f226;
    border-color: #3a3a3a;
}
.dot-small {
    width: 15px;
    height: 15px;
    background: #bcbed2;
    border-color: #3a3a3a;
}
.dot-on {
    width: 23px;
    height: 23px;
    background: #ff0;
}
.dot-off {
    width: 23px;
    height: 23px;
    background: #cdc1c9;
}
.io-grid {
    height: 219px;
    display: grid;
    grid-template-columns: repeat(6, 1fr);
    gap: 6px;
}
.io-col {
    display: flex;
    flex-direction: column;
    align-items: center;
    padding-top: 24px;
    background: #e4dae3;
}
.io-val {
    width: 80px;
    height: 30px;
    display: flex;
    align-items: center;
    justify-content: center;
    background: #fff;
    border: 1px solid #ede8ec;
    font-size: 12px;
    color: #222;
}
.io-btn {
    width: 46px;
    height: 28px;
    margin-top: 28px;
    padding: 0;
    border: 1px solid #8a8a8a;
    border-radius: 3px;
    background: linear-gradient(180deg, #f2f2f2 0, #e8e8e8 50%, #d2d2d2 50%, #cfcfcf 100%);
    box-shadow: inset 0 0 0 1px #f4f4f4;
}
.io-num {
    height: 18px;
    margin: 20px 0 12px;
    font-size: 12px;
    line-height: 18px;
    color: #222;
}
.io-status {
    flex: 1;
    background: #f0eeee;
}

/* taskbar */
.taskbar {
    position: absolute;
    left: 0;
    bottom: 0;
    width: 1920px;
    height: 47px;
    display: flex;
    align-items: center;
    padding-left: 11px;
    border-top: 1px solid #6a7c92;
    background: linear-gradient(90deg, #0a1630 0, #14274f 30%, #1a3058 60%, #1f3a66 100%);
    font-family: "Open Sans", sans-serif;
    line-height: 22px;
}
.orb {
    flex: none;
    display: flex;
    margin-right: 18px;
    height: 43px;
}
.tb-plain {
    flex: none;
    width: 65px;
    height: 46px;
    display: flex;
    align-items: center;
    justify-content: center;
    margin-right: 4px;
}
.tb {
    position: relative;
    flex: none;
    height: 46px;
    margin-right: 4px;
    display: flex;
    align-items: center;
    justify-content: center;
    border: 1px solid #77869a;
    border-radius: 3px;
    background: linear-gradient(135deg, #5c6b82 0, #46556f 38%, #2b3b5a 42%, #2a3a5c 100%);
    box-shadow: inset 0 0 0 1px rgba(255, 255, 255, 0.12);
}
.tb::after {
    content: "";
    position: absolute;
    top: 0;
    right: -4px;
    bottom: 0;
    width: 3px;
    border: 1px solid #56657c;
    border-left: none;
    border-radius: 0 3px 3px 0;
}
.tb-active {
    background: linear-gradient(135deg, #b4bcc8 0, #98a2b2 38%, #80899c 42%, #848da0 100%);
}
.w58 {
    width: 58px;
}
.w59 {
    width: 59px;
}
.w61 {
    width: 61px;
}
.w66 {
    width: 66px;
}
.w67 {
    width: 67px;
}
.gap-big {
    margin-left: 7px;
}
.gap-mid {
    margin-left: 5px;
}
.pdf-icon {
    width: 40px;
    height: 40px;
    display: flex;
    flex-direction: column;
    align-items: center;
    justify-content: flex-end;
    background: #f58220;
    color: #fff;
    font-size: 10.5px;
    font-weight: 600;
    line-height: 13px;
    padding-bottom: 1px;
}
.word-icon {
    position: relative;
    width: 38px;
    height: 38px;
    display: block;
}
.word-page {
    position: absolute;
    left: 6px;
    top: 9px;
    width: 31px;
    height: 28px;
    background: #fff;
    transform: rotate(-6deg);
}
.word-icon b {
    position: absolute;
    left: 1px;
    top: 2px;
    width: 29px;
    height: 28px;
    background: linear-gradient(180deg, #3c82d6, #1b4f9e);
    color: #fff;
    font-family: "Liberation Serif", serif;
    font-size: 27px;
    line-height: 28px;
    text-align: center;
}
.tray {
    margin-left: auto;
    height: 100%;
    display: flex;
    align-items: center;
    gap: 13px;
}
.tray-up {
    margin-right: 4px;
}
.clock {
    margin-left: 2px;
    width: 76px;
    text-align: center;
    color: #fff;
    font-size: 14.4px;
    white-space: nowrap;
}
.show-desktop {
    width: 14px;
    height: 46px;
    margin-left: -5px;
    border: 1px solid #6a7c92;
    background: linear-gradient(135deg, #46546c, #243452);
}
```
